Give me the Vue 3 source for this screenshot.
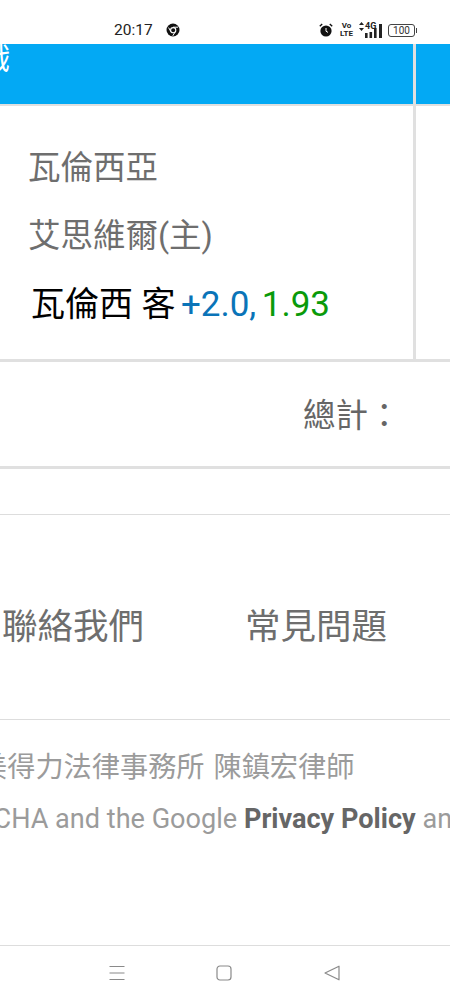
<script setup>
const footerLinks = ['聯絡我們', '常見問題']
</script>

<template>
  <div class="page">
    <div class="status-bar">
      <span class="clock">20:17</span>
      <svg class="chrome" width="14" height="14" viewBox="0 0 14 14">
        <circle cx="7" cy="7" r="6.5" fill="#111" />
        <circle cx="7.2" cy="7.2" r="2.6" fill="none" stroke="#fff" stroke-width="1.1" />
        <path d="M7 4.2h5M4.8 8.6 2.6 4.6M9.4 8.4l-2.6 4.4" stroke="#fff" stroke-width="1" fill="none" />
      </svg>
      <div class="status-right">
        <svg class="alarm" width="14" height="14" viewBox="0 0 14 14">
          <circle cx="7" cy="8" r="5.6" fill="#111" />
          <path d="M7 5v3.2l2 1.2" stroke="#fff" stroke-width="1" fill="none" />
          <path d="M.8 3.2 3.2.9M13.2 3.2 10.8.9" stroke="#111" stroke-width="1.4" />
        </svg>
        <span class="volte">Vo<br />LTE</span>
        <div class="signal">
          <svg class="updown" width="5" height="9" viewBox="0 0 5 9">
            <path d="M2.5 0 5 3H0zM2.5 9 0 6h5z" fill="#222" />
          </svg>
          <span class="net">4G</span>
          <svg class="bars" width="24" height="15" viewBox="0 0 24 15">
            <rect x="6" y="10" width="2.6" height="5" fill="#222" />
            <rect x="10.5" y="9" width="2.6" height="6" fill="#222" />
            <rect x="15" y="5" width="2.6" height="10" fill="#222" />
            <rect x="20" y="1" width="3" height="14" fill="#222" />
          </svg>
        </div>
        <div class="battery"><span>100</span></div>
      </div>
    </div>

    <div class="table-head">
      <div class="head-main"><span class="head-title">戲</span></div>
      <div class="head-side"></div>
    </div>

    <div class="table-body">
      <div class="match">
        <div class="team">瓦倫西亞</div>
        <div class="team">艾思維爾(主)</div>
        <div class="bet">
          <span class="pick">瓦倫西 客</span>
          <span class="handicap">+2.0,</span>
          <span class="odds">1.93</span>
        </div>
      </div>
      <div class="side"></div>
    </div>

    <div class="total">總計：</div>

    <div class="links">
      <span v-for="link in footerLinks" :key="link">{{ link }}</span>
    </div>

    <div class="legal">
      <div class="lawyer">美得力法律事務所 陳鎮宏律師</div>
      <div class="recaptcha">reCAPTCHA and the Google <b>Privacy Policy</b> and</div>
    </div>

    <div class="nav-bar">
      <svg width="18" height="16" viewBox="0 0 18 16">
        <path d="M1.5 1.5h15M1.5 8h15M1.5 14.5h15" stroke="#8a8a8a" stroke-width="1.2" />
      </svg>
      <svg width="16" height="16" viewBox="0 0 16 16">
        <rect x="1" y="1" width="14" height="14" rx="3" fill="none" stroke="#8a8a8a" stroke-width="1.2" />
      </svg>
      <svg class="back" width="16" height="16" viewBox="0 0 16 16">
        <path d="M1 8 15 1.2v13.6z" fill="none" stroke="#8a8a8a" stroke-width="1.2" stroke-linejoin="round" />
      </svg>
    </div>
  </div>
</template>

<style>
html,
body {
  margin: 0;
  background: #fff;
}
</style>

<style scoped>
.page {
  width: 450px;
  height: 1000px;
  overflow: hidden;
  display: flex;
  flex-direction: column;
  background: #fff;
  font-family: Roboto, "Noto Sans CJK TC", sans-serif;
}

.status-bar {
  height: 44px;
  flex: none;
  display: flex;
  align-items: center;
  padding-top: 16px;
  padding-left: 114px;
  padding-right: 35px;
  box-sizing: border-box;
  color: #222;
}

.clock {
  font-size: 15.5px;
}

.chrome {
  margin-left: 13px;
}

.status-right {
  margin-left: auto;
  display: flex;
  align-items: center;
  gap: 6px;
}

.volte {
  font-size: 8px;
  line-height: 8px;
  font-weight: 700;
  text-align: center;
  color: #222;
  margin-left: 1px;
}

.signal {
  position: relative;
  width: 24px;
  height: 15px;
}

.updown {
  position: absolute;
  left: 0;
  top: -1px;
}

.net {
  position: absolute;
  left: 6px;
  top: -1px;
  font-size: 9px;
  font-weight: 700;
  line-height: 9px;
  white-space: nowrap;
  color: #222;
}

.bars {
  display: block;
}

.battery {
  position: relative;
  width: 25px;
  height: 11px;
  border: 1px solid #444;
  border-radius: 3px;
  font-size: 10px;
  line-height: 11px;
  text-align: center;
  color: #333;
  margin-left: -1px;
}

.battery::after {
  content: "";
  position: absolute;
  right: -3px;
  top: 3px;
  width: 1.5px;
  height: 5px;
  background: #444;
}

.table-head {
  height: 62px;
  flex: none;
  display: flex;
  box-sizing: border-box;
  border-bottom: 2px solid #e0e0e0;
}

.head-main {
  width: 413px;
  background: #03a9f4;
  overflow: hidden;
}

.head-title {
  display: block;
  margin-left: -20px;
  font-size: 30px;
  line-height: 30px;
  color: #fff;
}

.head-side {
  flex: 1;
  background: #03a9f4;
  border-left: 3px solid #e0e0e0;
}

.table-body {
  height: 256px;
  flex: none;
  display: flex;
  box-sizing: border-box;
  border-bottom: 3px solid #e0e0e0;
}

.match {
  width: 413px;
  padding-left: 28px;
  padding-top: 39px;
  box-sizing: border-box;
}

.team {
  font-size: 32.5px;
  line-height: 46px;
  margin-bottom: 22px;
  color: #6e6e6e;
}

.bet {
  font-size: 34px;
  line-height: 46px;
  margin-left: 3px;
  white-space: nowrap;
  display: flex;
  align-items: baseline;
  gap: 5.5px;
}

.pick {
  color: #000;
}

.handicap {
  color: #0a74b8;
  font-size: 35px;
}

.odds {
  color: #0a9a0a;
  font-size: 35px;
}

.side {
  flex: 1;
  border-left: 3px solid #e0e0e0;
}

.total {
  height: 107px;
  flex: none;
  box-sizing: border-box;
  border-bottom: 3px solid #e0e0e0;
  padding-left: 303px;
  padding-top: 31px;
  font-size: 32.5px;
  line-height: 46px;
  color: #666;
}

.links {
  margin-top: 45px;
  height: 206px;
  flex: none;
  box-sizing: border-box;
  border-top: 1px solid #ddd;
  border-bottom: 1px solid #ddd;
  display: flex;
  align-items: center;
  padding-left: 2px;
  padding-top: 12px;
  gap: 101px;
  font-size: 35.5px;
  color: #6e6e6e;
}

.legal {
  flex: 1;
  overflow: hidden;
  white-space: nowrap;
  padding-top: 28px;
  color: #9b9b9b;
  font-size: 28.2px;
  line-height: 40px;
}

.lawyer {
  margin-left: -21px;
  word-spacing: 2px;
}

.recaptcha {
  margin-top: 11px;
  margin-left: -98px;
  font-size: 27.1px;
}

.recaptcha b {
  color: #666;
}

.nav-bar {
  height: 55px;
  flex: none;
  box-sizing: border-box;
  border-top: 1px solid #ddd;
  display: flex;
  align-items: center;
  padding-left: 108px;
  gap: 90px;
}

.back {
  margin-left: 2px;
}
</style>
